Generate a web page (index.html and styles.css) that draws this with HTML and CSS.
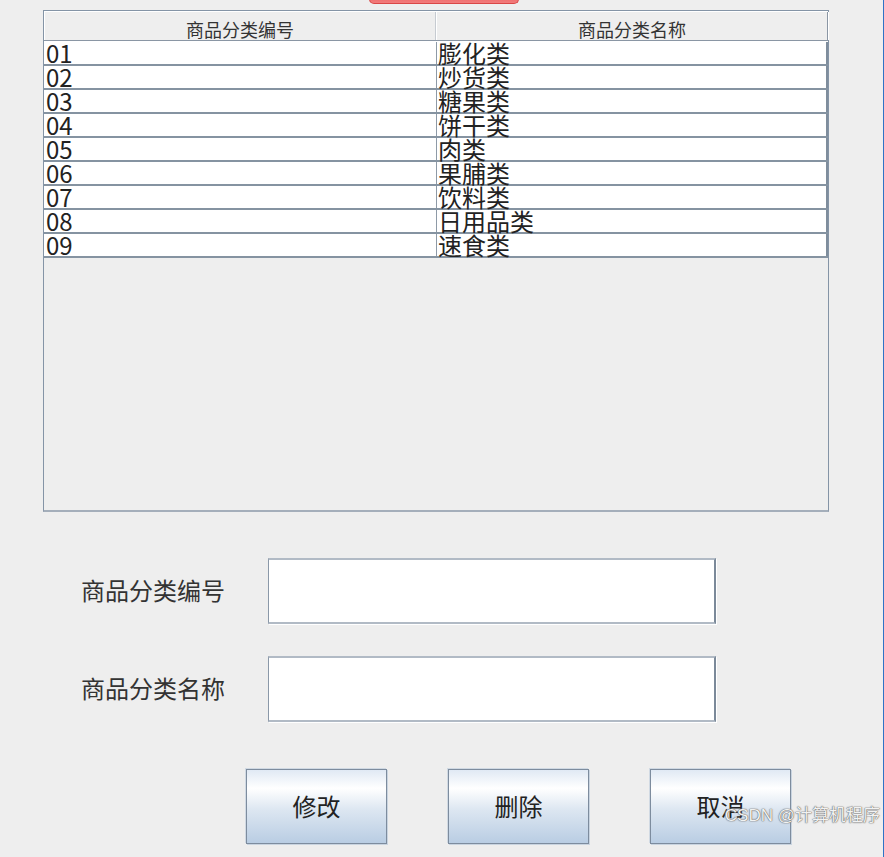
FILE: index.html
```html
<!DOCTYPE html>
<html lang="zh-CN">
  <head>
    <meta charset="UTF-8" />
    <meta name="viewport" content="width=device-width, initial-scale=1.0" />
    <title>商品分类管理</title>
    <link rel="stylesheet" href="styles.css">
  </head>
  <body>
    <div class="window">
      <!-- Button strip above the table (scrolled partly out of view) -->
      <div class="top-strip">
        <div class="red-button"></div>
      </div>

      <!-- Category table -->
      <div class="grid">
        <div class="grid-head">
          <div class="th">商品分类编号</div>
          <div class="th">商品分类名称</div>
        </div>
        <div class="grid-row"><div class="td">01</div><div class="td">膨化类</div></div>
        <div class="grid-row"><div class="td">02</div><div class="td">炒货类</div></div>
        <div class="grid-row"><div class="td">03</div><div class="td">糖果类</div></div>
        <div class="grid-row"><div class="td">04</div><div class="td">饼干类</div></div>
        <div class="grid-row"><div class="td">05</div><div class="td">肉类</div></div>
        <div class="grid-row"><div class="td">06</div><div class="td">果脯类</div></div>
        <div class="grid-row"><div class="td">07</div><div class="td">饮料类</div></div>
        <div class="grid-row"><div class="td">08</div><div class="td">日用品类</div></div>
        <div class="grid-row"><div class="td">09</div><div class="td">速食类</div></div>
      </div>

      <!-- Edit form -->
      <div class="form">
        <div class="form-row">
          <label class="form-label">商品分类编号</label>
          <div class="field"></div>
        </div>
        <div class="form-row">
          <label class="form-label">商品分类名称</label>
          <div class="field"></div>
        </div>
      </div>

      <div class="actions">
        <button class="btn">修改</button>
        <button class="btn">删除</button>
        <button class="btn">取消</button>
      </div>

      <!-- Watermark -->
      <div class="watermark">CSDN @计算机程序</div>
    </div>
  </body>
</html>
```

FILE: styles.css
```css
/* General styles */
html,
body {
  margin: 0;
  padding: 0;
  background-color: #eeeeee;
}

body {
  font-family: "Noto Sans CJK SC", "Noto Sans", sans-serif;
  color: #222;
}

/* Window frame */
.window {
  position: relative;
  width: 884px;
  height: 857px;
  box-sizing: border-box;
  border-right: 1px solid #2e73c6;
  overflow: hidden;
  background-color: #eeeeee;
}

/* Red button peeking in at the top */
.top-strip {
  height: 10px;
  display: flex;
  align-items: flex-end;
  padding-left: 369px;
  padding-bottom: 6px;
  box-sizing: border-box;
  overflow: hidden;
}

.red-button {
  flex: none;
  width: 150px;
  height: 24px;
  box-sizing: border-box;
  background: linear-gradient(#f7a0a0, #ef6464 70%, #f27c7c);
  border: 1px solid #d94747;
  border-top: none;
  border-radius: 0 0 5px 5px;
}

/* Table */
.grid {
  margin-left: 43px;
  width: 786px;
  height: 502px;
  box-sizing: border-box;
  border: 1px solid #8494a6;
  border-bottom: 2px solid #a4aeba;
  background-color: #eeeeee;
}

.grid-head {
  display: grid;
  grid-template-columns: 392px 392px;
  height: 30px;
  box-sizing: border-box;
  border-top: 1px solid #ffffff;
  border-bottom: 1px solid #8a96a4;
}

.th {
  box-sizing: border-box;
  padding-top: 8px;
  font-size: 18px;
  line-height: 18px;
  color: #333;
  text-align: center;
  border-left: 1px solid #ffffff;
  border-right: 1px solid #c6cbd1;
}

.th:last-child {
  border-right: 1px solid #8a96a4;
  box-shadow: 1px 0 0 #ffffff;
}

.grid-row {
  display: grid;
  grid-template-columns: 393px 391px;
  height: 24px;
  box-sizing: border-box;
  background-color: #ffffff;
  border-bottom: 2px solid #8593a1;
}

/* first row sits one pixel taller under the header */
.grid-head + .grid-row {
  height: 25px;
  padding-top: 1px;
}

.td {
  font-size: 24px;
  line-height: 22px;
  padding-left: 2px;
  white-space: nowrap;
}

.td:first-child {
  border-right: 1px solid #8e9aa7;
}

.td:last-child {
  padding-left: 1px;
  border-right: 2px solid #7f8d9c;
}

/* Form */
.form {
  margin-top: 46px;
  display: flex;
  flex-direction: column;
  gap: 32px;
}

.form-row {
  display: flex;
  align-items: center;
  padding-left: 81px;
}

.form-label {
  width: 187px;
  font-size: 24px;
  line-height: 30px;
  color: #333;
  margin-top: -3px;
}

.field {
  width: 448px;
  height: 66px;
  box-sizing: border-box;
  background-color: #ffffff;
  border-top: 2px solid #b1bac5;
  border-left: 1px solid #8a98a8;
  border-right: 2px solid #7b8999;
  border-bottom: 2px solid #b1bac5;
  box-shadow: 1px 1px 0 #ffffff;
}

/* Buttons */
.actions {
  margin-top: 47px;
  padding-left: 246px;
  display: flex;
  gap: 61px;
}

.btn {
  width: 141px;
  height: 75px;
  box-sizing: border-box;
  border: 1px solid #7d8c9e;
  box-shadow: 1px 1px 0 #c9d4e0, -1px -1px 0 #d0d9e3;
  background: linear-gradient(#e0e9f4, #ffffff 25%, #dce6f1 55%, #b9cde3);
  font-family: "Noto Sans CJK SC", "Noto Sans", sans-serif;
  font-size: 24px;
  color: #222;
  padding: 0 0 3px;
}

/* Watermark */
.watermark {
  position: absolute;
  right: 3px;
  top: 801px;
  font-family: "Liberation Sans", "Noto Sans CJK SC", sans-serif;
  font-size: 17px;
  color: #f2f2f2;
  text-shadow: 0 0 1px #555, 0 0 1px #777, 0 0 2px #aaa;
  white-space: nowrap;
}
```
